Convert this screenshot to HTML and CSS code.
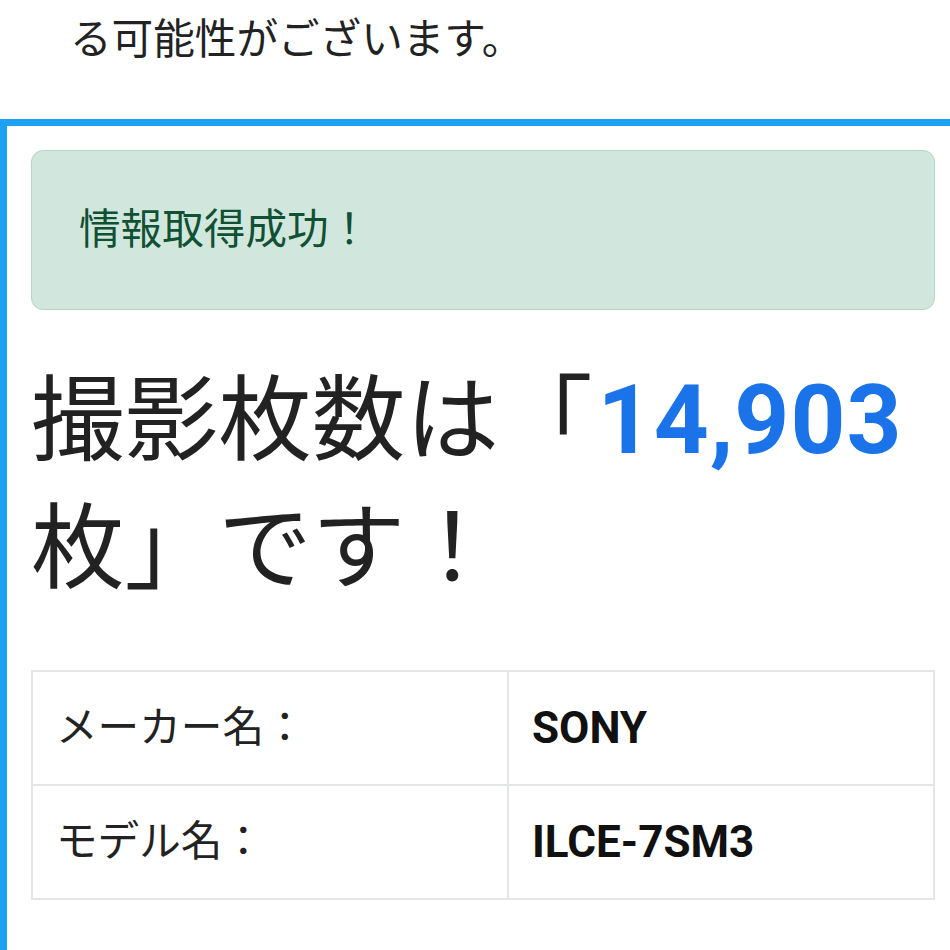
FILE: index.html
```html
<!DOCTYPE html>
<html lang="ja">
<head>
    <meta charset="UTF-8">
    <meta name="viewport" content="width=device-width, initial-scale=1.0">
    <title>撮影枚数チェック</title>
    <link rel="stylesheet" href="styles.css">
</head>
<body>
    <p class="note">る可能性がございます。</p>

    <section class="result-box">
        <div class="alert-success">情報取得成功！</div>
        <h2 class="count">撮影枚数は「<span class="count-num">14,903</span>枚」です！</h2>
        <table class="camera-info">
            <tr>
                <th>メーカー名：</th>
                <td>SONY</td>
            </tr>
            <tr>
                <th>モデル名：</th>
                <td>ILCE-7SM3</td>
            </tr>
        </table>
    </section>
</body>
</html>
```

FILE: styles.css
```css
* {
    box-sizing: border-box;
    font-family: Roboto, "Noto Sans CJK JP", sans-serif;
}
body {
    margin: 0;
    padding: 0;
    background-color: #fff;
    color: #212529;
}
.note {
    margin: 0;
    padding-left: 70px;
    font-size: 41.6px;
    line-height: 80px;
    color: #222;
}
.result-box {
    margin-top: 39px;
    border-top: 7px solid #1da1f2;
    border-left: 7px solid #1da1f2;
    padding: 24px 15px 50px 24px;
}
.alert-success {
    background-color: #d1e7dd;
    border: 1px solid #b5d6c4;
    border-radius: 12px;
    color: #0f5132;
    font-size: 41.6px;
    line-height: 60px;
    padding: 49px 47px;
}
.count {
    margin: 46px 0 57px;
    font-size: 93.6px;
    font-weight: normal;
    line-height: 128px;
    color: #222;
}
.count-num {
    color: #1a73e8;
    font-weight: bold;
    font-size: 96px;
    letter-spacing: 1px;
    margin-left: 5px;
}
.camera-info {
    width: 100%;
    border-collapse: collapse;
    font-size: 41.6px;
}
.camera-info th,
.camera-info td {
    border: 2px solid #e3e5e7;
    padding: 26px 23px;
    line-height: 60px;
    text-align: left;
}
.camera-info th {
    width: 476px;
    font-weight: normal;
    color: #222;
}
.camera-info td {
    font-size: 44px;
    font-weight: bold;
    color: #111;
}
```
